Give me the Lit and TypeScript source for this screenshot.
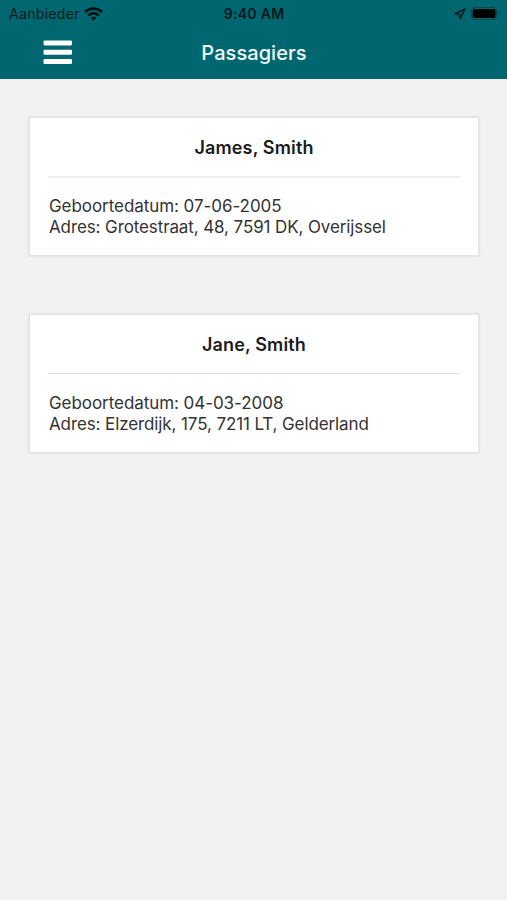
import { LitElement, html, css } from "lit";
import { customElement, property } from "lit/decorators.js";

@customElement("status-bar")
class StatusBar extends LitElement {
  static styles = css`
    :host { display: grid; grid-template-columns: 1fr auto 1fr; align-items: center; height: 27px; padding: 0 8px 0 9px; font-size: 14px; color: #02191c; }
    .side { display: flex; align-items: center; gap: 4px; letter-spacing: .32px; }
    .end { justify-content: flex-end; gap: 5px; }
    .time { font-weight: 600; letter-spacing: .3px; }
    svg { display: block; }
  `;
  render() {
    return html`
      <div class="side"><span>Aanbieder</span>
        <svg width="19" height="14" viewBox="0 0 19 14" fill="none" stroke="#020d0f" stroke-width="2.7">
          <path d="M1 5C5.8.3 13.2.3 18 5M4.2 8.4c3.2-2.9 7.4-2.9 10.6 0"/><path d="M6.7 10.8c1.7-1.4 3.9-1.4 5.6 0l-2.8 2.8z" fill="#020d0f" stroke="none"/>
        </svg></div>
      <span class="time">9:40 AM</span>
      <div class="side end">
        <svg width="12" height="12" viewBox="0 0 12 12" fill="none" stroke="#02191c" stroke-width="1.5" stroke-linejoin="round"><path d="M10.7 1.2 1.3 5.5l4 .9.9 4.2z"/></svg>
        <svg width="28" height="13" viewBox="0 0 28 13"><rect x=".5" y=".5" width="25" height="12" rx="3.5" fill="none" stroke="#01474d"/><rect x="1.7" y="2" width="22.8" height="9" rx="2"/><path d="M26.7 4.5q2 2 0 4z" fill="#01474d"/></svg>
      </div>`;
  }
}

@customElement("passenger-card")
class PassengerCard extends LitElement {
  @property() name = "";
  @property() born = "";
  @property() address = "";
  static styles = css`
    :host { display: block; box-sizing: border-box; height: 139px; padding: 0 18px; background: #fff; border: 1px solid #e1e4e5; box-shadow: 0 0 2px rgba(0,20,25,.13); color: #333; font-size: 17px; line-height: 21px; }
    h2 { margin: 0; height: 58px; line-height: 60px; font-size: 18px; font-weight: 600; letter-spacing: .15px; color: #1c1c1c; text-align: center; border-bottom: 2px solid #eee; }
    :host(:last-of-type) h2 { border-bottom: 1px solid #e2e2e2; margin-bottom: 1px; }
    .details { padding: 18px 0 0 1px; letter-spacing: -.11px; white-space: nowrap; }
    .born { letter-spacing: -.06px; }
  `;
  render() {
    return html`<h2>${this.name}</h2><div class="details"><div class="born">Geboortedatum: ${this.born}</div><div>Adres: ${this.address}</div></div>`;
  }
}

@customElement("app-root")
class AppRoot extends LitElement {
  static styles = css`
    :host { display: block; min-height: 100vh; background: #f1f1f1; font-family: Inter, "Liberation Sans", sans-serif; }
    header { background: #006770; height: 79px; }
    nav { display: grid; grid-template-columns: 1fr auto 1fr; align-items: center; height: 51px; padding: 0 42px 0 43px; }
    h1 { margin: 0; color: #f2fafa; font-size: 20px; font-weight: 500; letter-spacing: .06px; }
    svg { display: block; }
    main { display: flex; flex-direction: column; gap: 58px; padding: 38px 28px 0 29px; }
  `;
  render() {
    return html`<header><status-bar></status-bar><nav>
      <svg width="29" height="25" viewBox="0 0 29 25" fill="#fff"><rect x=".5" y=".4" width="28.5" height="5" rx="1.3"/><rect x=".5" y="9.7" width="28.5" height="5" rx="1.3"/><rect x=".5" y="19" width="28.5" height="5" rx="1.3"/></svg>
      <h1>Passagiers</h1></nav></header>
      <main>
        <passenger-card name="James, Smith" born="07-06-2005" address="Grotestraat, 48, 7591 DK, Overijssel"></passenger-card>
        <passenger-card name="Jane, Smith" born="04-03-2008" address="Elzerdijk, 175, 7211 LT, Gelderland"></passenger-card>
      </main>`;
  }
}
